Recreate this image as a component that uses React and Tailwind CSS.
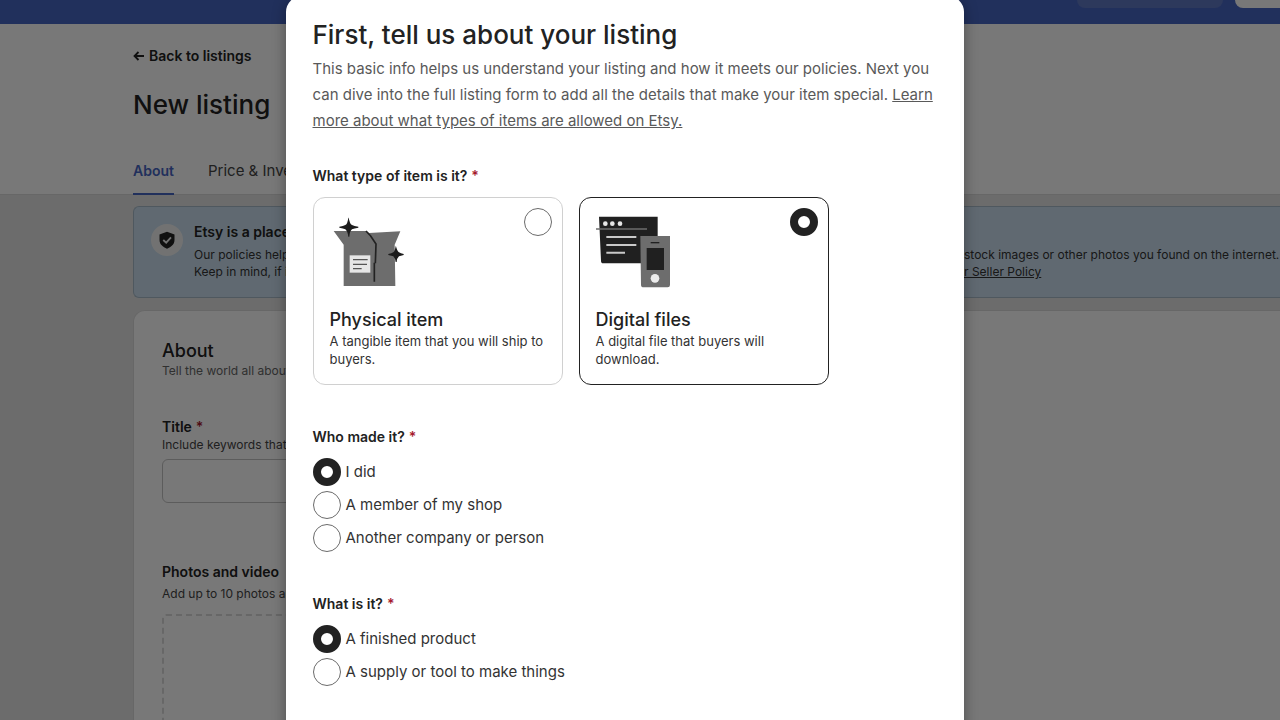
import React from "react";

const font = "font-['Inter','Liberation_Sans',sans-serif]";

function Required() {
  return <span className="ml-1 text-[#a61a2e]">*</span>;
}

function Radio({ name, id, defaultChecked }) {
  return (
    <input
      type="radio"
      id={id}
      name={name}
      defaultChecked={defaultChecked}
      className="size-7 shrink-0 appearance-none rounded-full border border-[#6b6b6b] bg-white checked:border-8 checked:border-[#222]"
    />
  );
}

function BoxDrawing() {
  return (
    <svg viewBox="2 0 270 252" className="h-[84px] w-[90px]" aria-hidden="true">
      <path d="M25 63H122L131 69L225 64L208 104L210 228H55V104Z" fill="#6d6d6d" />
      <path d="M122 63L136 78L152 102L150 160M147 158V215" fill="none" stroke="#222" strokeWidth="5" />
      <path d="M73 136H135V188H73Z" fill="#e6e6e6" />
      <path d="M83 149H127M83 163H125M83 176H109" stroke="#555" strokeWidth="4" />
      <path
        d="M70 23Q73 41 80 45Q86 48 99 50V53Q86 55 80 58Q73 64 72 80H69Q67 64 60 58Q54 55 42 53V50Q54 48 60 45Q67 41 69 23Z"
        fill="#1c1c1c"
      />
      <path
        d="M212 109Q215 123 221 127Q226 130 235 132V135Q226 137 221 139Q215 144 214 156H211Q209 144 204 139Q199 137 189 135V132Q199 130 204 127Q209 123 211 109Z"
        fill="#1c1c1c"
      />
    </svg>
  );
}

function DevicesDrawing() {
  return (
    <svg viewBox="6 0 270 252" className="h-[84px] w-[90px]" aria-hidden="true">
      <path d="M27 20H203V160H40Q33 160 33 152Z" fill="#202020" />
      <g fill="#e8e8e8">
        <circle cx="46" cy="41" r="7" />
        <circle cx="67" cy="41" r="7" />
        <circle cx="90" cy="41" r="7" />
      </g>
      <path d="M18 57H171" stroke="#6d6d6d" strokeWidth="5" />
      <path d="M49 81H139M49 105H139M49 128H105" stroke="#c9c9c9" strokeWidth="6" />
      <path d="M151 78H240V225Q240 232 233 232H161Q153 232 153 224Z" fill="#6d6d6d" />
      <path d="M170 114H222V180H170Z" fill="#202020" />
      <path d="M182 98H208" stroke="#202020" strokeWidth="4" />
      <circle cx="195" cy="205" r="13" fill="#ececec" />
    </svg>
  );
}

function TypeCard({ id, title, text, drawing, defaultChecked }) {
  return (
    <label
      htmlFor={id}
      className="flex h-[188px] w-[250px] flex-col rounded-xl border border-[#d0d0d0] has-checked:border-[#222]"
    >
      <span className="flex justify-between pt-2.5 pr-2.5 pl-3">
        <span className="pt-0.5">{drawing}</span>
        <Radio name="type" id={id} defaultChecked={defaultChecked} />
      </span>
      <span className="mt-3.5 px-4 text-lg leading-6 font-medium">{title}</span>
      <span className="pr-3 pl-4 text-[13px] leading-[18px] text-[#333]">{text}</span>
    </label>
  );
}

function Choice({ name, id, children, defaultChecked }) {
  return (
    <div className="flex h-[33px] items-center gap-[5px]">
      <Radio name={name} id={id} defaultChecked={defaultChecked} />
      <label htmlFor={id} className="text-[15px] leading-6 text-[#333]">
        {children}
      </label>
    </div>
  );
}

function Page() {
  return (
    <div className="flex min-h-full flex-col bg-[#e6e6e6]">
      <header className="flex h-6 items-start justify-end gap-3 bg-[#4766c4]">
        <div className="h-2 w-[146px] rounded-b-2xl bg-[#6079c4]" />
        <div className="h-2 w-[45px] rounded-bl-2xl bg-white" />
      </header>

      <div className="border-b border-[#dcdcdc] bg-white pl-[133px]">
        <a href="#listings" className="flex items-center gap-1 pt-[22px] text-sm leading-5 font-semibold">
          <svg viewBox="0 0 12 12" className="size-3" aria-hidden="true">
            <path d="M11 6H1.500M5.500 2L1.500 6L5.500 10" fill="none" stroke="#222" strokeWidth="1.800" />
          </svg>
          Back to listings
        </a>
        <h1 className="mt-[23px] text-[26px] leading-8 font-medium">New listing</h1>
        <nav className="mt-10 flex gap-[34px] text-[15px] leading-5">
          <a href="#about" className="-mb-px border-b-2 border-[#4766c4] pb-3 text-sm leading-5 font-semibold text-[#4766c4]">
            About
          </a>
          <a href="#price" className="text-[#444]">
            Price &amp; Inventory
          </a>
        </nav>
      </div>

      <section className="mt-[11px] ml-[133px] flex h-[92px] gap-[11px] rounded-l-md border border-r-0 border-[#a9bccb] bg-[#cce0f0] pt-[15px] pl-[17px]">
        <div className="mt-0.5 flex size-8 shrink-0 items-center justify-center rounded-full bg-[#f3f3f3]">
          <svg viewBox="0 0 24 24" className="size-5" aria-hidden="true">
            <path d="M12 2L21 5.500V12C21 17 17 20.500 12 22.500C7 20.500 3 17 3 12V5.500Z" fill="#222" />
            <path d="M7.500 12L11 15.200L16.800 8.800" fill="none" stroke="#f3f3f3" strokeWidth="2.200" />
          </svg>
        </div>
        <div className="w-[759px] shrink-0">
          <h2 className="text-sm leading-5 font-semibold">Etsy is a place</h2>
          <p className="mt-1 text-xs leading-[17px] text-[#333]">
            Our policies help
            <br />
            Keep in mind, if it
          </p>
        </div>
        <p className="mt-6 shrink-0 text-xs leading-[17px] text-[#333]">
          stock images or other photos you found on the internet.
          <br />
          <a href="#policy" className="underline">
            r Seller Policy
          </a>
        </p>
      </section>

      <section className="mt-3 ml-[133px] flex-1 rounded-tl-xl border-t border-l border-[#dcdcdc] bg-white pt-7 pl-7">
        <h2 className="text-lg leading-6 font-medium">About</h2>
        <p className="text-xs leading-4 text-[#666]">Tell the world all about</p>
        <label htmlFor="title" className="mt-[38px] block text-sm leading-5 font-semibold">
          Title
          <Required />
        </label>
        <p className="text-xs leading-4 text-[#444]">Include keywords that</p>
        <input
          id="title"
          type="text"
          className="mt-1.5 block h-11 w-1/2 rounded-md border border-[#c4c4c4] bg-white px-3"
        />
        <h3 className="mt-[59px] text-sm leading-5 font-semibold">Photos and video</h3>
        <p className="mt-1 text-xs leading-4 text-[#444]">Add up to 10 photos and</p>
        <div className="mt-3 h-48 w-1/2 rounded-sm border-2 border-dashed border-[#dadada]" />
      </section>
    </div>
  );
}

export default function App() {
  return (
    <div className={`${font} relative h-screen overflow-hidden text-[#222]`}>
      <Page />
      <div className="absolute inset-0 flex items-start justify-center overflow-hidden bg-black/53 pr-[31px]">
        <main
          role="dialog"
          aria-labelledby="dialog-title"
          className="-mt-1 min-h-[110%] w-[678px] rounded-2xl bg-white px-[27px] pt-[21px] shadow-[0_2px_14px_rgba(0,0,0,0.35)]"
        >
          <h2 id="dialog-title" className="text-[26px] leading-9 font-medium">
            First, tell us about your listing
          </h2>
          <p className="mt-[3px] text-[15px] leading-[26px] text-[#595959]">
            This basic info helps us understand your listing and how it meets our policies. Next you can dive into the
            full listing form to add all the details that make your item special.{" "}
            <a href="#learn" className="underline">
              Learn more about what types of items are allowed on Etsy.
            </a>
          </p>

          <fieldset className="mt-[30px]">
            <legend className="text-sm leading-6 font-semibold">
              What type of item is it?
              <Required />
            </legend>
            <div className="mt-[9px] flex gap-4">
              <TypeCard
                id="physical"
                title="Physical item"
                text="A tangible item that you will ship to buyers."
                drawing={<BoxDrawing />}
              />
              <TypeCard
                id="digital"
                title="Digital files"
                text="A digital file that buyers will download."
                drawing={<DevicesDrawing />}
                defaultChecked
              />
            </div>
          </fieldset>

          <fieldset className="mt-10">
            <legend className="pb-1.5 text-sm leading-6 font-semibold">
              Who made it?
              <Required />
            </legend>
            <Choice name="who" id="who-me" defaultChecked>
              I did
            </Choice>
            <Choice name="who" id="who-member">
              A member of my shop
            </Choice>
            <Choice name="who" id="who-other">
              Another company or person
            </Choice>
          </fieldset>

          <fieldset className="mt-[38px]">
            <legend className="pb-1.5 text-sm leading-6 font-semibold">
              What is it?
              <Required />
            </legend>
            <Choice name="what" id="what-finished" defaultChecked>
              A finished product
            </Choice>
            <Choice name="what" id="what-supply">
              A supply or tool to make things
            </Choice>
          </fieldset>
        </main>
      </div>
    </div>
  );
}
